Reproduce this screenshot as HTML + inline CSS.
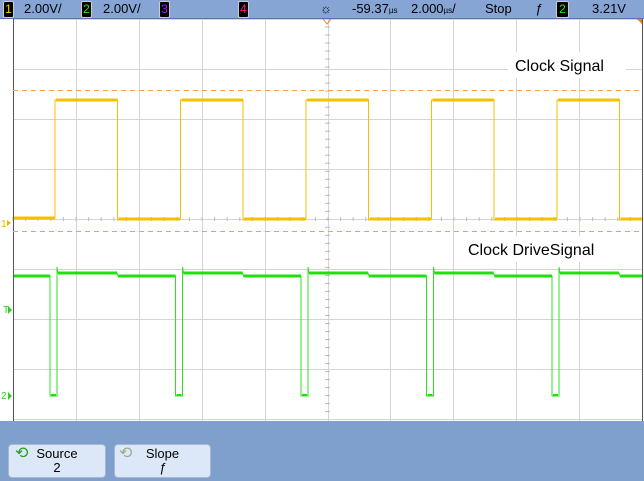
<!DOCTYPE html>
<html><head><style>
body{margin:0;width:644px;height:481px;overflow:hidden;background:#fff;font-family:"Liberation Sans",sans-serif}
#hdr{position:absolute;left:0;top:0;width:644px;height:18px;background:#86a5d5;border-bottom:1px solid #5a76a8}
.t{position:absolute;top:1px;font-size:13px;color:#000;line-height:16px}
.b{position:absolute;top:1px;height:15px;width:9px;background:#000;border:1px solid #ccc;border-radius:2px;font-size:12px;line-height:15px;text-align:center}
#bot{position:absolute;left:0;top:421px;width:644px;height:60px;background:#7f9fcd}
.btn{position:absolute;top:444px;height:32px;background:#dce8f7;border:1px solid #a8b8d0;border-radius:4px;font-size:13px;text-align:center;line-height:14px}
</style></head><body>
<svg width="644" height="481" style="position:absolute;left:0;top:0" id="s">
<g id="grid" stroke="#d4d4d4" stroke-width="1"></g>
<line x1="13.5" y1="19" x2="13.5" y2="421" stroke="#555"/>
<line x1="642.5" y1="19" x2="642.5" y2="421" stroke="#555"/>
<rect x="508" y="52" width="118" height="26" fill="#fff"/>
<rect x="462" y="236" width="166" height="26" fill="#fff"/>
<line x1="13" y1="90.5" x2="642" y2="90.5" stroke="#f5a050" stroke-dasharray="5,4"/>
<line x1="13" y1="231.5" x2="642" y2="231.5" stroke="#f5a050" stroke-dasharray="5,4"/>
<polyline id="y" fill="none" stroke="#f5c000" stroke-width="1"/>
<g id="yh" stroke="#f5c000" stroke-width="3"></g>
<polyline id="g" fill="none" stroke="#30e020" stroke-width="1"/>
<g id="gh" stroke="#20e010" stroke-width="3"></g>
<text x="515" y="71" font-size="16" font-family="Liberation Sans">Clock Signal</text>
<text x="468" y="255" font-size="16" font-family="Liberation Sans">Clock DriveSignal</text>
<text x="1" y="227" font-size="10" fill="#f5b000">1</text>
<path d="M7 220l4 3-4 3z" fill="#f5b000"/>
<text x="3" y="313" font-size="10" fill="#30d020">T</text>
<path d="M8 306l4 4-4 4z" fill="#30d020"/>
<text x="1" y="399" font-size="10" fill="#30d020">2</text>
<path d="M8 392l4 4-4 4z" fill="#30d020"/>
<path d="M323 19l4 5 4-5" fill="none" stroke="#f08000"/>
<path d="M637 19h5v5z" fill="#f08000"/>
</svg>
<div id="hdr">
<div class="b" style="left:3px;color:#f5d000">1</div><div class="t" style="left:24px">2.00V/</div>
<div class="b" style="left:81px;color:#30e020">2</div><div class="t" style="left:103px">2.00V/</div>
<div class="b" style="left:159px;color:#a020f0">3</div>
<div class="b" style="left:238px;color:#ff2080">4</div>
<div class="t" style="left:320px">☼</div>
<div class="t" style="left:352px">-59.37<span style="font-size:8px">µs</span></div>
<div class="t" style="left:411px">2.000<span style="font-size:8px">µs</span>/</div>
<div class="t" style="left:485px">Stop</div>
<div class="t" style="left:535px;font-style:italic">ƒ</div>
<div class="b" style="left:556px;color:#30e020;width:11px">2</div>
<div class="t" style="left:592px">3.21V</div>
</div>
<div id="bot"></div>
<div class="btn" style="left:8px;width:96px"><span style="position:absolute;left:6px;top:2px;color:#20a020;font-size:16px">⟲</span><div style="margin-top:2px">Source</div><div>2</div></div>
<div class="btn" style="left:114px;width:95px"><span style="position:absolute;left:4px;top:2px;color:#a0a890;font-size:16px">⟲</span><div style="margin-top:2px">Slope</div><div style="font-style:italic">ƒ</div></div>
<script>
var g=document.getElementById('grid'),h='';
for(var i=0;i<=10;i++){var x=Math.round(13+i*62.9)+.5;h+='<line x1="'+x+'" y1="19" x2="'+x+'" y2="421"/>';}
for(var j=0;j<=8;j++){var y=19+j*50+.5;h+='<line x1="13" y1="'+y+'" x2="642" y2="'+y+'"/>';}
for(var k=13;k<642;k+=12.6){h+='<line x1="'+k+'" y1="217" x2="'+k+'" y2="221" stroke="#bbb"/><line x1="325" y1="'+(19+(k-13)/629*400)+'" x2="330" y2="'+(19+(k-13)/629*400)+'" stroke="#bbb"/>';}
g.innerHTML=h;
var P=125.5,yp=[[14,218]],gp=[[14,276]],gh='',yh='<line x1="14" y1="218" x2="55" y2="218"/>';
for(var n=0;n<5;n++){var r=55+n*P,f=117.5+n*P,p=50+n*P;
yp.push([r,218],[r,100],[f,100],[f,220]);
yh+='<line x1="'+(r+1)+'" y1="100" x2="'+f+'" y2="100"/><line x1="'+(f+1)+'" y1="219" x2="'+(n<4?r+P:642)+'" y2="219"/>';
gp.push([p,276],[p,396],[p+7,396],[p+7,267],[p+8,273],[r+62,273],[r+63,276]);
gh+='<line x1="'+(p+8)+'" y1="273" x2="'+(r+62)+'" y2="273"/><line x1="'+(r+63)+'" y1="276" x2="'+(n<4?p+P:642)+'" y2="276"/><line x1="'+(p+1)+'" y1="395" x2="'+(p+6)+'" y2="395" stroke-width="2"/>';}
yp.push([642,220]);gp.push([642,276]);
var s=function(a){return a.map(function(q){return q[0]+','+q[1]}).join(' ')};
document.getElementById('y').setAttribute('points',s(yp));
document.getElementById('yh').innerHTML=yh;
document.getElementById('g').setAttribute('points',s(gp));
document.getElementById('gh').innerHTML='<line x1="14" y1="276" x2="50" y2="276"/>'+gh;
</script>
</body></html>
